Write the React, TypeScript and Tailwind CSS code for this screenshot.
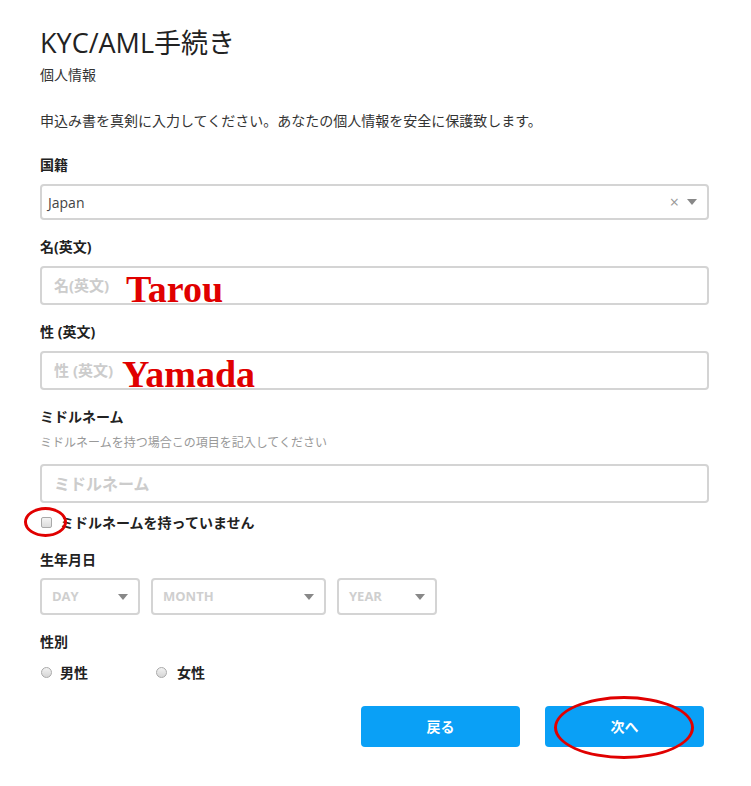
import React from "react";

const font = { fontFamily: '"Open Sans", "Noto Sans CJK JP", sans-serif' };

function Caret() {
    return (
        <svg width="10" height="6" viewBox="0 0 10 6" className="shrink-0">
            <path d="M0 0h10L5 6z" fill="#888" />
        </svg>
    );
}

function Label({ children }: { children: React.ReactNode }) {
    return <div className="text-[14px] leading-[20px] font-bold text-[#222]">{children}</div>;
}

function TextBox({ placeholder, big }: { placeholder: string; big?: boolean }) {
    return (
        <div className="h-[39px] w-full rounded-[4px] border-2 border-[#d4d4d4] bg-white flex items-center px-[12px]">
            <span className={(big ? "text-[16px]" : "text-[15px]") + " font-bold text-[#cccccc]"}>
                {placeholder}
            </span>
        </div>
    );
}

function DateSelect({ text, width }: { text: string; width: string }) {
    return (
        <div
            className={
                width +
                " h-[37px] rounded-[4px] border-2 border-[#d4d4d4] bg-white flex items-center justify-between pl-[10px] pr-[10px]"
            }
        >
            <span className="text-[13px] font-bold text-[#cfcfcf]">{text}</span>
            <Caret />
        </div>
    );
}

export default function App() {
    return (
        <div className="min-h-screen bg-white text-[#333]" style={font}>
            <div className="relative w-[669px] ml-[40px] pt-[28px] pb-[40px]">
                <h1 className="text-[27px] leading-[30px] font-normal text-[#222]">KYC/AML手続き</h1>
                <div className="mt-[7px] text-[14px] leading-[20px]">個人情報</div>
                <div className="mt-[26px] text-[14px] leading-[20px]">
                    申込み書を真剣に入力してください。あなたの個人情報を安全に保護致します。
                </div>

                <div className="mt-[24px]">
                    <Label>国籍</Label>
                </div>
                <div className="mt-[9px] h-[36px] rounded-[4px] border-2 border-[#d4d4d4] flex items-center pl-[6px] pr-[10px]">
                    <span className="text-[14px] text-[#444] flex-1">Japan</span>
                    <span className="text-[16px] text-[#999] mr-[8px] leading-none">×</span>
                    <Caret />
                </div>

                <div className="mt-[17px]">
                    <Label>名(英文)</Label>
                </div>
                <div className="mt-[9px] relative">
                    <TextBox placeholder="名(英文)" />
                    <span
                        className="absolute left-[86px] top-[1px] text-[38px] leading-[44px] font-bold text-[#e00000]"
                        style={{ fontFamily: '"Liberation Serif", serif' }}
                    >
                        Tarou
                    </span>
                </div>

                <div className="mt-[17px]">
                    <Label>性 (英文)</Label>
                </div>
                <div className="mt-[9px] relative">
                    <TextBox placeholder="性 (英文)" />
                    <span
                        className="absolute left-[82px] top-[1px] text-[38px] leading-[44px] font-bold text-[#e00000]"
                        style={{ fontFamily: '"Liberation Serif", serif' }}
                    >
                        Yamada
                    </span>
                </div>

                <div className="mt-[17px]">
                    <Label>ミドルネーム</Label>
                </div>
                <div className="mt-[6px] text-[12px] leading-[20px] text-[#999]">
                    ミドルネームを持つ場合この項目を記入してください
                </div>
                <div className="mt-[11px]">
                    <TextBox placeholder="ミドルネーム" big />
                </div>

                <div className="mt-[9px] relative flex items-center h-[20px]">
                    <span className="ml-[1px] w-[11px] h-[11px] border border-[#a9a9a9] rounded-[2px] bg-gradient-to-b from-[#f4f4f4] to-[#dcdcdc]" />
                    <span className="ml-[8px] text-[14px] font-bold text-[#222]">ミドルネームを持っていません</span>
                    <span className="absolute left-[-16px] top-[-5px] w-[43px] h-[30px] rounded-[50%] border-[3px] border-[#e00000]" />
                </div>

                <div className="mt-[18px]">
                    <Label>生年月日</Label>
                </div>
                <div className="mt-[8px] flex gap-[11px]">
                    <DateSelect text="DAY" width="w-[100px]" />
                    <DateSelect text="MONTH" width="w-[175px]" />
                    <DateSelect text="YEAR" width="w-[100px]" />
                </div>

                <div className="mt-[17px]">
                    <Label>性別</Label>
                </div>
                <div className="mt-[10px] flex items-center h-[20px]">
                    <span className="ml-[1px] w-[11px] h-[11px] rounded-full border border-[#aaa] bg-gradient-to-b from-[#f2f2f2] to-[#d6d6d6]" />
                    <span className="ml-[8px] text-[14px] font-bold text-[#222]">男性</span>
                    <span className="ml-[68px] w-[11px] h-[11px] rounded-full border border-[#aaa] bg-gradient-to-b from-[#f2f2f2] to-[#d6d6d6]" />
                    <span className="ml-[10px] text-[14px] font-bold text-[#222]">女性</span>
                </div>

                <div className="mt-[24px] flex justify-end gap-[25px] pr-[5px]">
                    <button className="w-[159px] h-[41px] rounded-[4px] bg-[#0aa0f6] text-white text-[14px] font-bold">
                        戻る
                    </button>
                    <div className="relative">
                        <button className="w-[159px] h-[41px] rounded-[4px] bg-[#0aa0f6] text-white text-[14px] font-bold">
                            次へ
                        </button>
                        <span className="absolute left-[9px] top-[-10px] w-[140px] h-[63px] rounded-[50%] border-[3px] border-[#e00000]" />
                    </div>
                </div>
            </div>
        </div>
    );
}
